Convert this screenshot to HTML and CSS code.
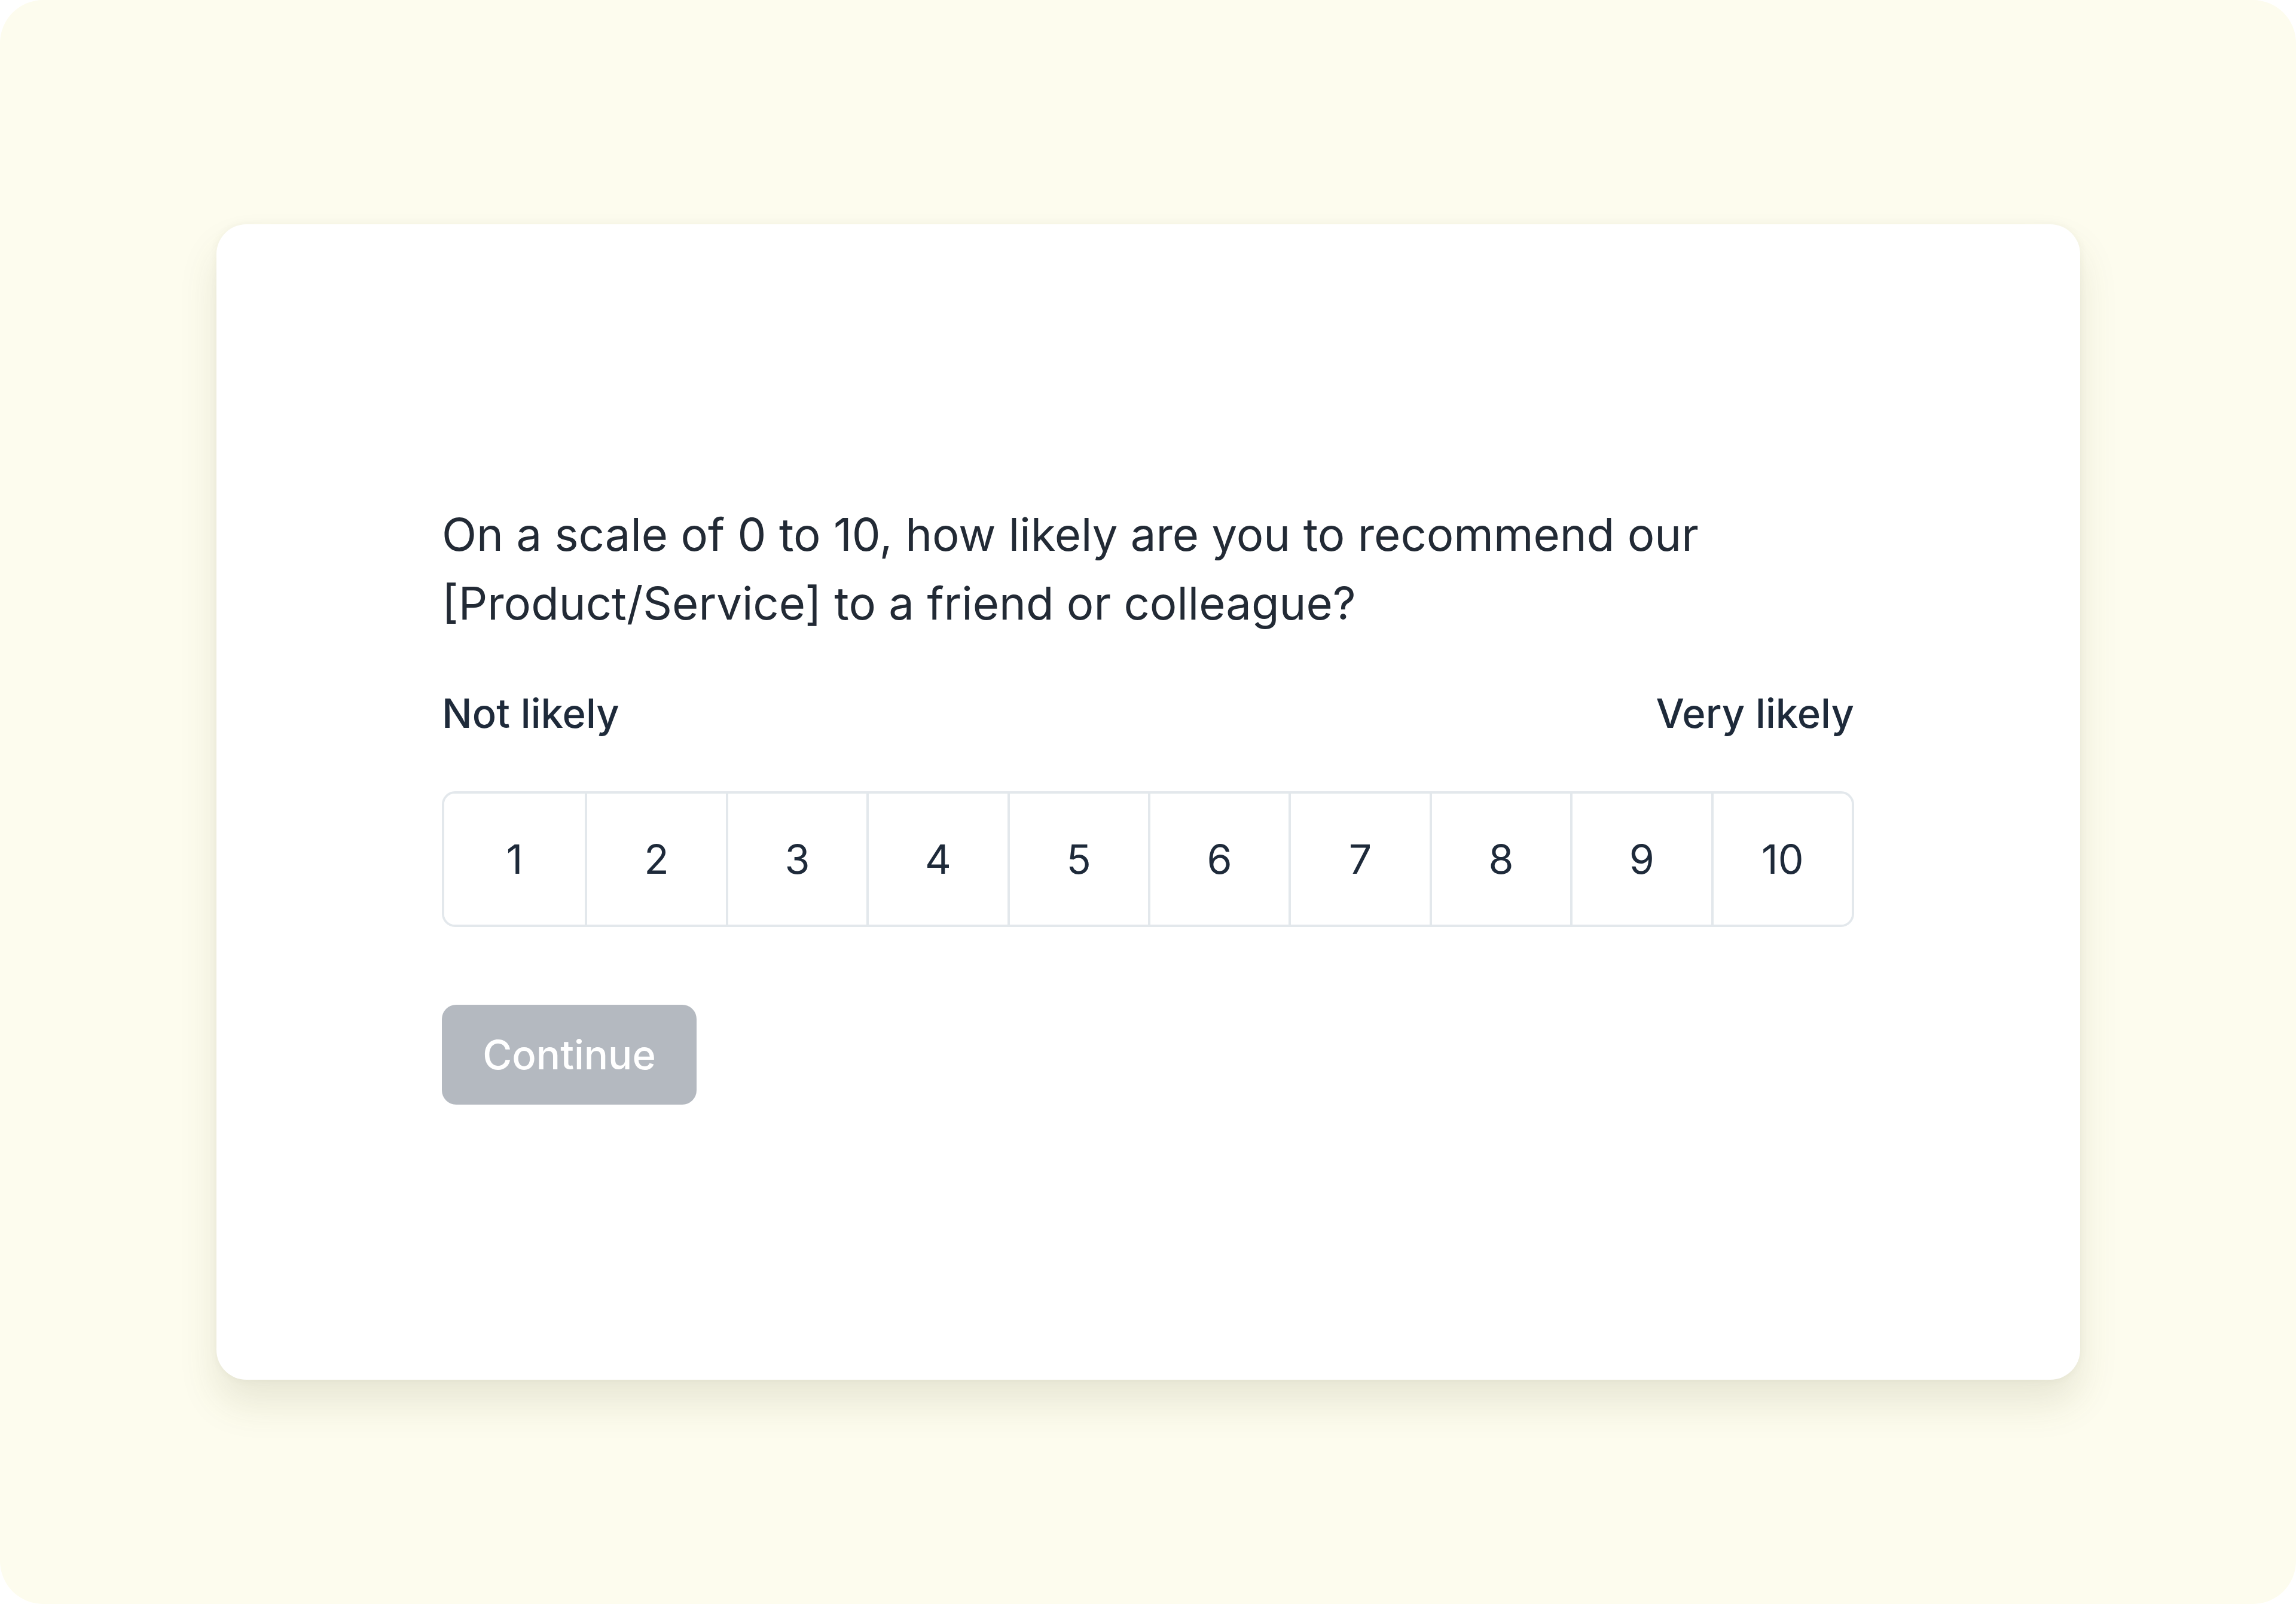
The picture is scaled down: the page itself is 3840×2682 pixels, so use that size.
FILE: index.html
```html
<!DOCTYPE html>
<html lang="en">
<head>
<meta charset="utf-8">
<title>NPS Survey</title>
<link rel="stylesheet" href="styles.css">
</head>
<body>
<div class="frame">
  <div class="card">
    <div class="content">
      <p class="question">On a scale of 0 to 10, how likely are you to recommend our [Product/Service] to a friend or colleague?</p>
      <div class="labels">
        <span>Not likely</span>
        <span>Very likely</span>
      </div>
      <div class="scale">
        <button class="cell">1</button>
        <button class="cell">2</button>
        <button class="cell">3</button>
        <button class="cell">4</button>
        <button class="cell">5</button>
        <button class="cell">6</button>
        <button class="cell">7</button>
        <button class="cell">8</button>
        <button class="cell">9</button>
        <button class="cell">10</button>
      </div>
      <div class="actions">
        <button class="continue" disabled>Continue</button>
      </div>
    </div>
  </div>
</div>
</body>
</html>
```

FILE: styles.css
```css
* { box-sizing: border-box; }
html, body { margin: 0; padding: 0; background: #ffffff; }
body { font-family: Inter, "Noto Sans", "Liberation Sans", sans-serif; }

.frame {
  width: 3840px;
  height: 2682px;
  background: #fdfcee;
  border-radius: 72px;
  display: flex;
  align-items: center;
  justify-content: center;
}

.card {
  width: 3117px;
  height: 1932px;
  background: #ffffff;
  border-radius: 50px;
  box-shadow: 0 40px 64px rgba(90, 90, 50, 0.13), 0 0 14px rgba(90, 90, 50, 0.06);
  display: flex;
  align-items: center;
  justify-content: center;
}

.content {
  width: 2362px;
  display: flex;
  flex-direction: column;
}

.question {
  margin: 0;
  font-size: 76px;
  line-height: 115px;
  color: #222a35;
  font-weight: 400;
}

.labels {
  margin-top: 82px;
  display: flex;
  justify-content: space-between;
  font-size: 67px;
  line-height: 90px;
  font-weight: 500;
  color: #1e2a3a;
}

.scale {
  margin-top: 85px;
  display: grid;
  grid-template-columns: repeat(10, 1fr);
  border: 4px solid #e3e8ec;
  border-radius: 22px;
  height: 227px;
  overflow: hidden;
}

.cell {
  border: 0;
  border-left: 4px solid #e3e8ec;
  background: #ffffff;
  font-family: inherit;
  font-size: 68px;
  color: #1e2a3a;
  display: flex;
  align-items: center;
  justify-content: center;
  padding: 0;
}
.cell:first-child { border-left: 0; }

.actions {
  margin-top: 130px;
  display: flex;
}

.continue {
  width: 426px;
  height: 167px;
  border: 0;
  border-radius: 24px;
  background: #b4b9c0;
  color: #ffffff;
  font-family: inherit;
  font-size: 67px;
  font-weight: 500;
  padding: 0;
}
```
